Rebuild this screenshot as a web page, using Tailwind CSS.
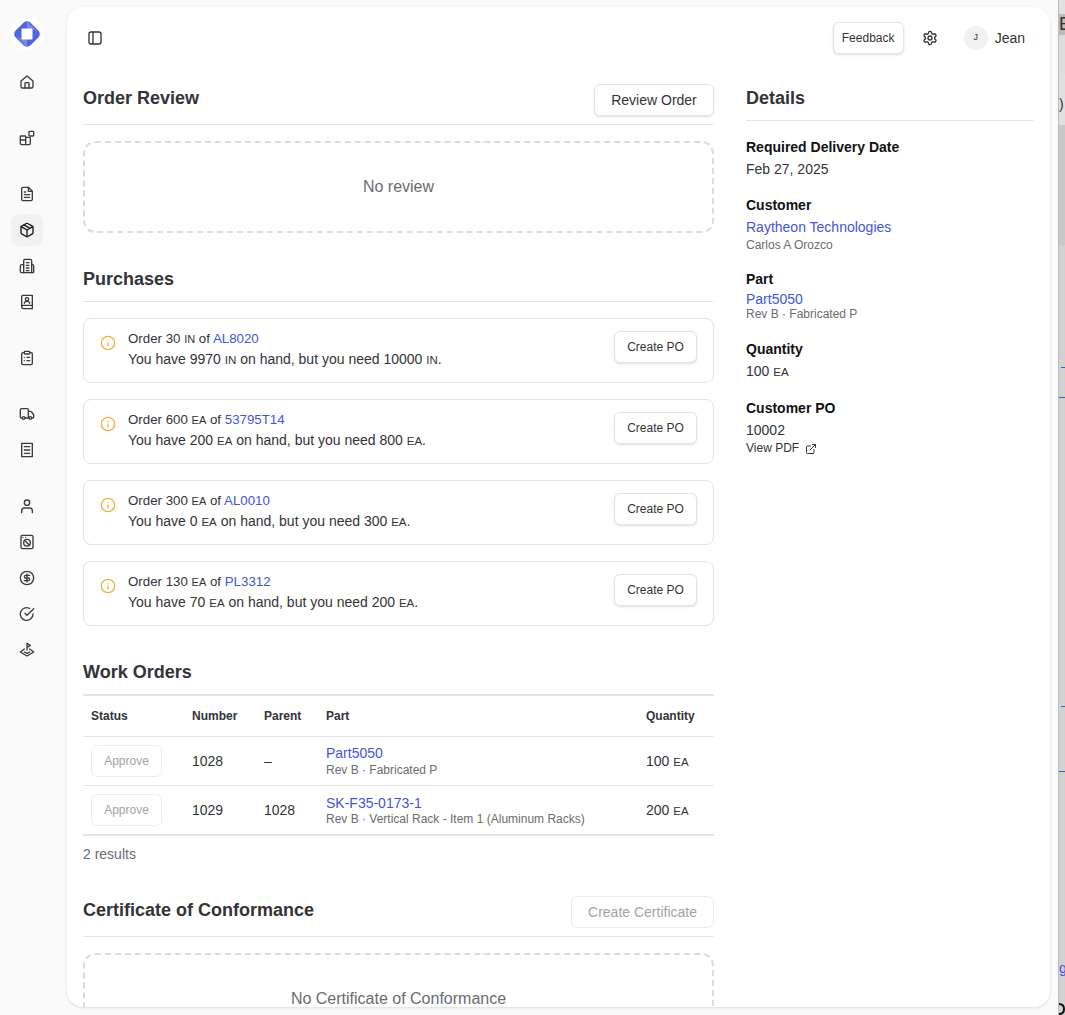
<!DOCTYPE html>
<html lang="en"><head><meta charset="utf-8"><title>Order</title>
<script src="https://cdn.jsdelivr.net/npm/@tailwindcss/browser@4"></script></head>
<body class="m-0 h-[1015px] w-[1065px] overflow-hidden bg-[#fafafa] font-['Liberation_Sans',Arial,sans-serif] text-[#333338]">
<div class="relative flex h-[1015px] w-[1065px]">
  <nav class="mr-[13px] flex w-[54px] shrink-0 flex-col items-center pt-[18px] text-[#3a3a40]">
    <svg class="mb-4 h-8 w-8" viewBox="0 0 32 32"><rect width="32" height="32" rx="14" fill="#fff"/><rect x="5.500" y="5.500" width="21" height="21" rx="5" transform="rotate(45 16 16)" fill="#4f63e6"/><path d="M16 3 L27 14 L21 11 L16 11Z M16 29 L5 18 L11 21 L16 21Z" fill="#8a97f2" opacity=".7"/><rect x="10.500" y="10.500" width="11" height="11" rx="1" fill="#fff"/></svg>
    <div class="flex flex-col items-center gap-1">
      <span class="flex h-8 w-8 items-center justify-center"><svg class="h-4 w-4" viewBox="0 0 24 24" fill="none" stroke="currentColor" stroke-width="2" stroke-linecap="round" stroke-linejoin="round"><path d="M3 10.500 12 3l9 7.500V19a2 2 0 0 1-2 2H5a2 2 0 0 1-2-2z"/><path d="M9 21v-7a1 1 0 0 1 1-1h4a1 1 0 0 1 1 1v7"/></svg></span>
      <span class="mt-5 flex h-8 w-8 items-center justify-center"><svg class="h-4 w-4" viewBox="0 0 24 24" fill="none" stroke="currentColor" stroke-width="2" stroke-linejoin="round"><path d="M3 9h6a1 1 0 0 1 1 1v5H2v-5a1 1 0 0 1 1-1zM2 15h8v7H4a2 2 0 0 1-2-2zM10 11h6a1 1 0 0 1 1 1v8a2 2 0 0 1-2 2h-5z"/><rect x="15" y="2" width="7" height="7" rx="1"/></svg></span>
      <span class="mt-5 flex h-8 w-8 items-center justify-center"><svg class="h-4 w-4" viewBox="0 0 24 24" fill="none" stroke="currentColor" stroke-width="2" stroke-linecap="round" stroke-linejoin="round"><path d="M14 2H6a2 2 0 0 0-2 2v16a2 2 0 0 0 2 2h12a2 2 0 0 0 2-2V8z"/><path d="M14 2v6h6M8 13h8M8 17h8M8 9h2"/></svg></span>
      <span class="flex h-8 w-8 items-center justify-center rounded-lg bg-[#f1f1f1]"><svg class="h-4 w-4" viewBox="0 0 24 24" fill="none" stroke="#18181b" stroke-width="2" stroke-linecap="round" stroke-linejoin="round"><path d="M21 8v8a2 2 0 0 1-1 1.700l-7 4a2 2 0 0 1-2 0l-7-4A2 2 0 0 1 3 16V8a2 2 0 0 1 1-1.700l7-4a2 2 0 0 1 2 0l7 4A2 2 0 0 1 21 8z"/><path d="M3.300 7 12 12l8.700-5M12 22V12M7.500 4.300l9 5.200"/></svg></span>
      <span class="flex h-8 w-8 items-center justify-center"><svg class="h-4 w-4" viewBox="0 0 24 24" fill="none" stroke="currentColor" stroke-width="2" stroke-linecap="round" stroke-linejoin="round"><path d="M7 22V4a2 2 0 0 1 2-2h8a2 2 0 0 1 2 2v18"/><path d="M7 10H4a2 2 0 0 0-2 2v8a2 2 0 0 0 2 2h17a1 1 0 0 0 1-1v-9a2 2 0 0 0-3-2"/><path d="M11 7h4M11 11h4M11 15h4M11 19h4"/></svg></span>
      <span class="flex h-8 w-8 items-center justify-center"><svg class="h-4 w-4" viewBox="0 0 24 24" fill="none" stroke="currentColor" stroke-width="2" stroke-linecap="round" stroke-linejoin="round"><path d="M4 19.500V4a2 2 0 0 1 2-2h14v20H6.500A2.500 2.500 0 0 1 4 19.500zM4 19.500A2.500 2.500 0 0 1 6.500 17H20"/><circle cx="12" cy="8" r="2.500"/><path d="M8 14c0-2 2-3 4-3s4 1 4 3"/></svg></span>
      <span class="mt-5 flex h-8 w-8 items-center justify-center"><svg class="h-4 w-4" viewBox="0 0 24 24" fill="none" stroke="currentColor" stroke-width="2" stroke-linecap="round" stroke-linejoin="round"><rect x="8" y="2" width="8" height="4" rx="1"/><path d="M16 4h2a2 2 0 0 1 2 2v14a2 2 0 0 1-2 2H6a2 2 0 0 1-2-2V6a2 2 0 0 1 2-2h2"/><path d="M12 11h4M12 16h4M8 11h.01M8 16h.01"/></svg></span>
      <span class="mt-5 flex h-8 w-8 items-center justify-center"><svg class="h-4 w-4" viewBox="0 0 24 24" fill="none" stroke="currentColor" stroke-width="2" stroke-linecap="round" stroke-linejoin="round"><path d="M14 18V6a2 2 0 0 0-2-2H4a2 2 0 0 0-2 2v11a1 1 0 0 0 1 1h2M15 18H9M19 18h2a1 1 0 0 0 1-1v-3.600a1 1 0 0 0-.2-.6l-3.500-4.400A1 1 0 0 0 17.500 8H14"/><circle cx="17" cy="18" r="2"/><circle cx="7" cy="18" r="2"/></svg></span>
      <span class="flex h-8 w-8 items-center justify-center"><svg class="h-4 w-4" viewBox="0 0 24 24" fill="none" stroke="currentColor" stroke-width="2" stroke-linecap="round" stroke-linejoin="round"><path d="M4 2h16v20H4zM8 7h8M8 12h8M8 17h8"/></svg></span>
      <span class="mt-5 flex h-8 w-8 items-center justify-center"><svg class="h-4 w-4" viewBox="0 0 24 24" fill="none" stroke="currentColor" stroke-width="2" stroke-linecap="round" stroke-linejoin="round"><circle cx="12" cy="7" r="4"/><path d="M4 22v-3a4 4 0 0 1 4-4h8a4 4 0 0 1 4 4v3"/></svg></span>
      <span class="flex h-8 w-8 items-center justify-center"><svg class="h-4 w-4" viewBox="0 0 24 24" fill="none" stroke="currentColor" stroke-width="2" stroke-linecap="round" stroke-linejoin="round"><rect x="3" y="2" width="18" height="20" rx="2"/><circle cx="12" cy="13" r="5"/><path d="M9 10l6 6M6 5h.01M10 5h.01"/></svg></span>
      <span class="flex h-8 w-8 items-center justify-center"><svg class="h-4 w-4" viewBox="0 0 24 24" fill="none" stroke="currentColor" stroke-width="2" stroke-linecap="round" stroke-linejoin="round"><circle cx="12" cy="12" r="10"/><path d="M16 8h-6a2 2 0 1 0 0 4h4a2 2 0 1 1 0 4H8M12 18V6"/></svg></span>
      <span class="flex h-8 w-8 items-center justify-center"><svg class="h-4 w-4" viewBox="0 0 24 24" fill="none" stroke="currentColor" stroke-width="2" stroke-linecap="round" stroke-linejoin="round"><path d="M21 12a9.500 9.500 0 1 1-5-8.300"/><path d="m9 11 3 3L22 4"/></svg></span>
      <span class="flex h-8 w-8 items-center justify-center"><svg class="h-4 w-4" viewBox="0 0 24 24" fill="none" stroke="currentColor" stroke-width="2" stroke-linecap="round" stroke-linejoin="round"><path d="M12 12V2l5 3-5 3"/><path d="M8 10.500 2 15l10 6 10-6-6-4.500"/><path d="M8 15l4 2 4-2"/></svg></span>
    </div>
  </nav>

  <main class="mt-[7px] h-[1000px] w-[983px] shrink-0 overflow-hidden rounded-2xl bg-white shadow-[0_1px_3px_rgba(0,0,0,0.12)]">
    <header class="flex h-[62px] items-center justify-between pl-5 pr-[25px]">
      <svg class="h-4 w-4 text-[#333338]" viewBox="0 0 24 24" fill="none" stroke="currentColor" stroke-width="2"><rect x="3" y="3" width="18" height="18" rx="3"/><path d="M9 3v18"/></svg>
      <div class="flex items-center">
        <button class="h-8 w-[71px] rounded-md border border-[#e4e4e7] bg-white text-xs shadow-sm">Feedback</button>
        <svg class="ml-[18px] h-4 w-4" viewBox="0 0 24 24" fill="none" stroke="currentColor" stroke-width="2" stroke-linecap="round" stroke-linejoin="round"><path d="M12.220 2h-.44a2 2 0 0 0-2 2v.18a2 2 0 0 1-1 1.730l-.43.25a2 2 0 0 1-2 0l-.15-.08a2 2 0 0 0-2.730.73l-.22.38a2 2 0 0 0 .73 2.730l.15.1a2 2 0 0 1 1 1.720v.51a2 2 0 0 1-1 1.740l-.15.09a2 2 0 0 0-.73 2.730l.22.38a2 2 0 0 0 2.730.73l.15-.08a2 2 0 0 1 2 0l.43.25a2 2 0 0 1 1 1.730V20a2 2 0 0 0 2 2h.44a2 2 0 0 0 2-2v-.18a2 2 0 0 1 1-1.730l.43-.25a2 2 0 0 1 2 0l.15.08a2 2 0 0 0 2.730-.73l.22-.39a2 2 0 0 0-.73-2.730l-.15-.08a2 2 0 0 1-1-1.740v-.5a2 2 0 0 1 1-1.740l.15-.09a2 2 0 0 0 .73-2.730l-.22-.38a2 2 0 0 0-2.730-.73l-.15.08a2 2 0 0 1-2 0l-.43-.25a2 2 0 0 1-1-1.730V4a2 2 0 0 0-2-2z"/><circle cx="12" cy="12" r="3"/></svg>
        <span class="ml-[26px] flex h-6 w-6 items-center justify-center rounded-full bg-[#f1f1f1] text-[9px]">J</span>
        <span class="ml-[7px] text-sm">Jean</span>
      </div>
    </header>
    <div class="flex items-start gap-8 pl-4 pr-4">
      <div class="w-[631px] shrink-0">
        <section>
          <div class="flex h-[56px] items-start justify-between border-b border-[#e4e4e7] pt-[15px]">
            <h2 class="mt-[2px] text-lg leading-6 font-bold">Order Review</h2>
            <button class="h-8 w-[120px] rounded-md border border-[#e4e4e7] bg-white text-sm shadow-sm">Review Order</button>
          </div>
          <div class="mt-4 flex h-[92px] items-center justify-center rounded-xl border-2 border-dashed border-[#dcdcde] text-base text-[#6b6b70]">No review</div>
        </section>
        <section class="mt-[34px]">
          <h2 class="border-b border-[#e4e4e7] pb-[10px] text-lg leading-6 font-bold">Purchases</h2>
          <div class="mt-4 flex flex-col gap-4">
            <div class="flex h-[65px] items-center rounded-lg border border-[#e4e4e7] pr-4 pl-4">
              <svg class="mb-[15px] h-4 w-4 shrink-0 text-[#eeb23e]" viewBox="0 0 24 24" fill="none" stroke="currentColor" stroke-width="2" stroke-linecap="round"><circle cx="12" cy="12" r="10"/><path d="M12 16v-4M12 8h.01"/></svg>
              <div class="mb-[3px] ml-3 flex-1 text-sm leading-[21px]"><div class="text-[13.300px]">Order 30 <span class="text-[11px]">IN</span> of <a class="text-[#3f55e0]">AL8020</a></div><div class="-mt-px">You have 9970 <span class="text-[11.500px]">IN</span> on hand, but you need 10000 <span class="text-[11.500px]">IN</span>.</div></div>
              <button class="mb-[8px] h-8 w-[83px] rounded-md border border-[#e4e4e7] bg-white text-xs shadow-sm">Create PO</button>
            </div>
            <div class="flex h-[65px] items-center rounded-lg border border-[#e4e4e7] pr-4 pl-4">
              <svg class="mb-[15px] h-4 w-4 shrink-0 text-[#eeb23e]" viewBox="0 0 24 24" fill="none" stroke="currentColor" stroke-width="2" stroke-linecap="round"><circle cx="12" cy="12" r="10"/><path d="M12 16v-4M12 8h.01"/></svg>
              <div class="mb-[3px] ml-3 flex-1 text-sm leading-[21px]"><div class="text-[13.300px]">Order 600 <span class="text-[11px]">EA</span> of <a class="text-[#3f55e0]">53795T14</a></div><div class="-mt-px">You have 200 <span class="text-[11.500px]">EA</span> on hand, but you need 800 <span class="text-[11.500px]">EA</span>.</div></div>
              <button class="mb-[8px] h-8 w-[83px] rounded-md border border-[#e4e4e7] bg-white text-xs shadow-sm">Create PO</button>
            </div>
            <div class="flex h-[65px] items-center rounded-lg border border-[#e4e4e7] pr-4 pl-4">
              <svg class="mb-[15px] h-4 w-4 shrink-0 text-[#eeb23e]" viewBox="0 0 24 24" fill="none" stroke="currentColor" stroke-width="2" stroke-linecap="round"><circle cx="12" cy="12" r="10"/><path d="M12 16v-4M12 8h.01"/></svg>
              <div class="mb-[3px] ml-3 flex-1 text-sm leading-[21px]"><div class="text-[13.300px]">Order 300 <span class="text-[11px]">EA</span> of <a class="text-[#3f55e0]">AL0010</a></div><div class="-mt-px">You have 0 <span class="text-[11.500px]">EA</span> on hand, but you need 300 <span class="text-[11.500px]">EA</span>.</div></div>
              <button class="mb-[8px] h-8 w-[83px] rounded-md border border-[#e4e4e7] bg-white text-xs shadow-sm">Create PO</button>
            </div>
            <div class="flex h-[65px] items-center rounded-lg border border-[#e4e4e7] pr-4 pl-4">
              <svg class="mb-[15px] h-4 w-4 shrink-0 text-[#eeb23e]" viewBox="0 0 24 24" fill="none" stroke="currentColor" stroke-width="2" stroke-linecap="round"><circle cx="12" cy="12" r="10"/><path d="M12 16v-4M12 8h.01"/></svg>
              <div class="mb-[3px] ml-3 flex-1 text-sm leading-[21px]"><div class="text-[13.300px]">Order 130 <span class="text-[11px]">EA</span> of <a class="text-[#3f55e0]">PL3312</a></div><div class="-mt-px">You have 70 <span class="text-[11.500px]">EA</span> on hand, but you need 200 <span class="text-[11.500px]">EA</span>.</div></div>
              <button class="mb-[8px] h-8 w-[83px] rounded-md border border-[#e4e4e7] bg-white text-xs shadow-sm">Create PO</button>
            </div>
          </div>
        </section>
        <section class="mt-[34px]">
          <h2 class="pb-[10px] text-lg leading-6 font-bold">Work Orders</h2>
          <table class="w-full table-fixed border-y-2 border-[#e4e4e7] text-sm">
            <thead><tr class="h-[41px] border-b border-[#e4e4e7] text-left text-xs font-bold">
              <th class="w-[109px] pl-2">Status</th><th class="w-[72px]">Number</th><th class="w-[62px]">Parent</th><th>Part</th><th class="w-[68px]">Quantity</th></tr></thead>
            <tbody>
              <tr class="h-[49px] border-b border-[#e4e4e7]"><td class="pl-2"><button class="h-8 w-[71px] rounded-md border border-[#ececee] text-xs text-[#a3a3a8]">Approve</button></td><td>1028</td><td>–</td><td><a class="block leading-[18px] text-[#3f55e0]">Part5050</a><span class="mt-px block text-xs leading-[14px] text-[#6b6b70]">Rev B · Fabricated P</span></td><td>100 <span class="text-[11.500px]">EA</span></td></tr>
              <tr class="h-[50px]"><td class="pl-2"><button class="h-8 w-[71px] rounded-md border border-[#ececee] text-xs text-[#a3a3a8]">Approve</button></td><td>1029</td><td>1028</td><td><a class="block leading-[18px] text-[#3f55e0]">SK-F35-0173-1</a><span class="block text-xs leading-[14px] text-[#6b6b70]">Rev B · Vertical Rack - Item 1 (Aluminum Racks)</span></td><td>200 <span class="text-[11.500px]">EA</span></td></tr>
            </tbody>
          </table>
          <p class="mt-2 text-sm leading-5 text-[#6b6b70]">2 results</p>
        </section>
        <section class="mt-[32px]">
          <div class="flex h-[41px] items-start justify-between border-b border-[#e4e4e7]">
            <h2 class="mt-[2px] text-lg leading-6 font-bold">Certificate of Conformance</h2>
            <button class="h-8 w-[143px] rounded-md border border-[#ececee] bg-white text-sm text-[#a3a3a8]">Create Certificate</button>
          </div>
          <div class="mt-4 flex h-[92px] items-center justify-center rounded-xl border-2 border-dashed border-[#dcdcde] text-base text-[#6b6b70]">No Certificate of Conformance</div>
        </section>
      </div>
      <aside class="w-[288px] shrink-0">
        <h2 class="border-b border-[#e4e4e7] pt-[17px] pb-[10px] text-lg leading-6 font-bold">Details</h2>
        <dl class="mt-4 flex flex-col gap-[15px] text-sm">
          <div><dt class="leading-5 font-bold text-[#111]">Required Delivery Date</dt><dd class="mt-[2px] leading-5">Feb 27, 2025</dd></div>
          <div class="mt-[1px]"><dt class="leading-5 font-bold text-[#111]">Customer</dt><dd class="mt-[2px] leading-5 text-[#3f55e0]">Raytheon Technologies</dd><dd class="text-xs leading-[16px] text-[#6b6b70]">Carlos A Orozco</dd></div>
          <div class="mt-[1px]"><dt class="leading-5 font-bold text-[#111]">Part</dt><dd class="mt-[1px] leading-[18px] text-[#3f55e0]">Part5050</dd><dd class="text-xs leading-[13px] text-[#6b6b70]">Rev B · Fabricated P</dd></div>
          <div class="mt-[3px]"><dt class="leading-5 font-bold text-[#111]">Quantity</dt><dd class="mt-[2px] leading-5">100 <span class="text-[11.500px]">EA</span></dd></div>
          <div class="mt-[1px]"><dt class="leading-5 font-bold text-[#111]">Customer PO</dt><dd class="mt-[2px] leading-5">10002</dd><dd class="mt-[1px] flex items-center gap-[6px] text-xs leading-[15px]">View PDF <svg class="h-3 w-3" viewBox="0 0 24 24" fill="none" stroke="currentColor" stroke-width="2" stroke-linecap="round" stroke-linejoin="round"><path d="M15 3h6v6M10 14 21 3M18 13v6a2 2 0 0 1-2 2H5a2 2 0 0 1-2-2V8a2 2 0 0 1 2-2h6"/></svg></dd></div>
        </dl>
      </aside>
    </div>
  </main>
  <div class="relative ml-[8px] flex h-[1015px] flex-1 flex-col overflow-hidden border-l border-[#bdbdbd] bg-[#d2d2d2] text-[#333]">
    <div class="h-[14px] bg-[#e2e2e2]"></div>
    <div class="h-[21px] bg-[#bcbcbc] text-lg leading-[21px]">B</div>
    <div class="h-[39px] bg-[#dddddd]"></div>
    <div class="h-[51px] bg-[#e0e0e0] text-sm leading-[60px]">)</div>
    <div class="h-[120px] bg-[#c8c8c8]"></div>
    <div class="h-[122px] bg-[#d2d2d2]"></div>
    <div class="h-[1px] w-[4px] self-end bg-[#3f55e0]"></div>
    <div class="mt-[29px] h-[1px] bg-[#3f55e0]"></div>
    <div class="mt-[308px] h-[1px] w-[4px] self-end bg-[#3f55e0]"></div>
    <div class="mt-[64px] h-[1px] bg-[#3f55e0]"></div>
    <div class="mt-[188px] text-sm leading-4 text-[#3f55e0]">g</div>
    <svg class="absolute bottom-0 left-0 h-[12px] w-[7px]" viewBox="0 0 7 12" fill="none" stroke="#111" stroke-width="2"><path d="M0 1c3 0 5 2 5 5s-2 5-5 5"/></svg>
  </div>
</div>
</body></html>
